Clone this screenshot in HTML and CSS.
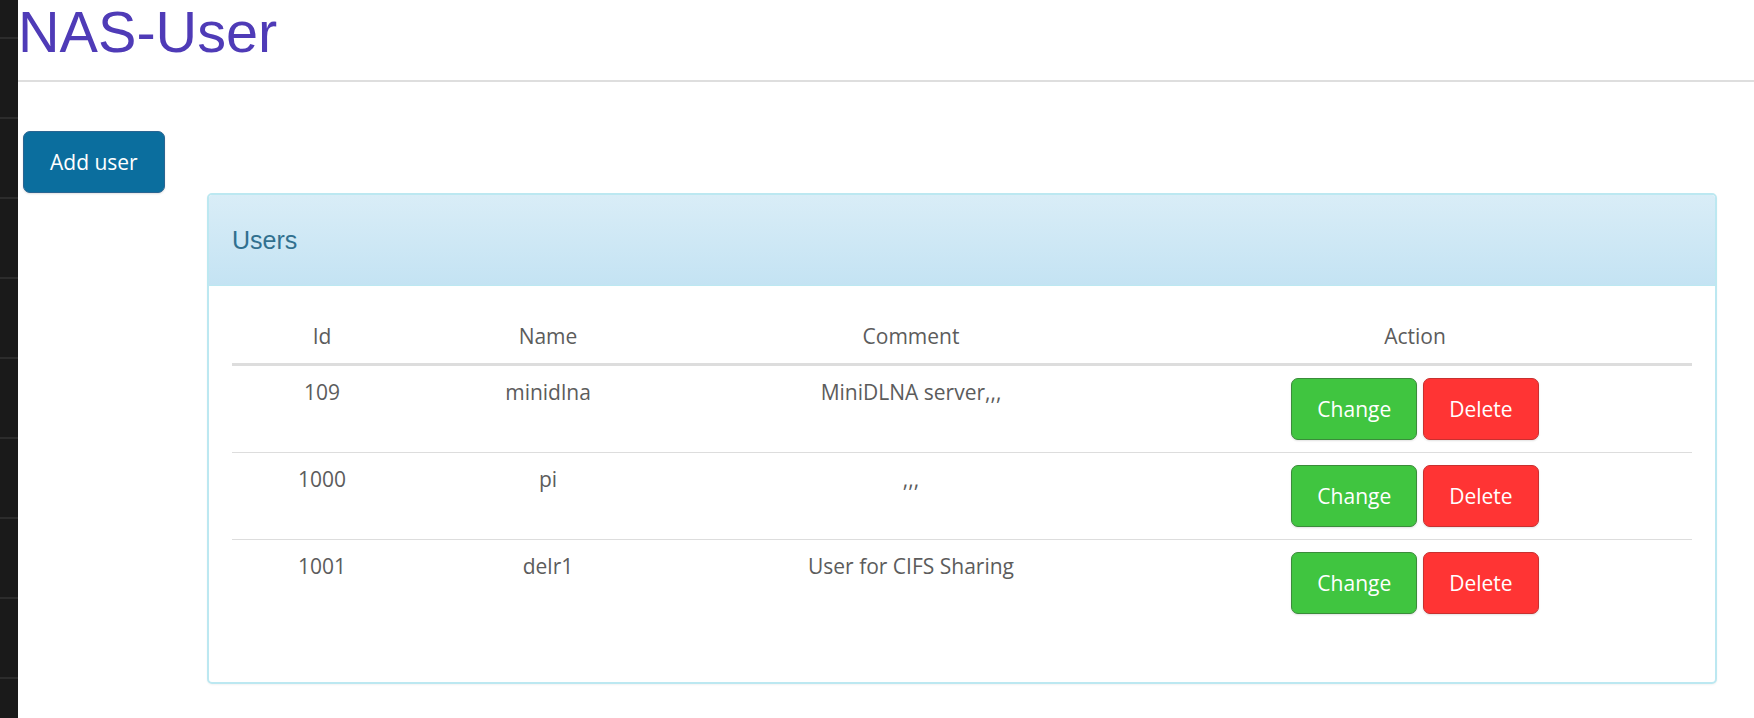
FILE: index.html
```html
<!DOCTYPE html>
<html lang="en">
<head>
<meta charset="utf-8">
<title>NAS-User</title>
<link rel="stylesheet" href="styles.css">
</head>
<body>
<div class="sidebar"></div>
<main class="main">
  <header class="page-header">
    <h1 class="title">NAS-User</h1>
  </header>
  <div class="toolbar">
    <button class="btn btn-primary">Add user</button>
  </div>
  <section class="panel">
    <div class="panel-heading">
      <h3 class="panel-title">Users</h3>
    </div>
    <div class="panel-body">
      <table class="table">
        <thead>
          <tr>
            <th class="col-id">Id</th>
            <th class="col-name">Name</th>
            <th class="col-comment">Comment</th>
            <th class="col-action">Action</th>
          </tr>
        </thead>
        <tbody>
          <tr>
            <td>109</td>
            <td>minidlna</td>
            <td>MiniDLNA server,,,</td>
            <td><div class="actions"><button class="btn btn-success">Change</button><button class="btn btn-danger">Delete</button></div></td>
          </tr>
          <tr>
            <td>1000</td>
            <td>pi</td>
            <td>,,,</td>
            <td><div class="actions"><button class="btn btn-success">Change</button><button class="btn btn-danger">Delete</button></div></td>
          </tr>
          <tr>
            <td>1001</td>
            <td>delr1</td>
            <td>User for CIFS Sharing</td>
            <td><div class="actions"><button class="btn btn-success">Change</button><button class="btn btn-danger">Delete</button></div></td>
          </tr>
        </tbody>
      </table>
    </div>
  </section>
</main>
</body>
</html>
```

FILE: styles.css
```css
* { box-sizing: border-box; }

html, body {
  margin: 0;
  padding: 0;
  background: #ffffff;
  height: 100%;
}

body {
  font-family: "Open Sans", "Liberation Sans", Arial, sans-serif;
  font-size: 21px;
  line-height: 28px;
  color: #5c5c5c;
  overflow: hidden;
}

.sidebar {
  position: fixed;
  left: 0;
  top: 0;
  bottom: 0;
  width: 18px;
  background-color: #1a1a1a;
  background-image: repeating-linear-gradient(
    to bottom,
    #1a1a1a 0px,
    #1a1a1a 37px,
    #2c2c2c 37px,
    #2c2c2c 39px,
    #1a1a1a 39px,
    #1a1a1a 80px
  );
  z-index: 2;
}

.main {
  padding-left: 16px;
}

.page-header {
  border-bottom: 2px solid #dedede;
  padding-bottom: 16px;
}

.title {
  margin: 0 0 0 2px;
  font-family: "Liberation Sans", Arial, sans-serif;
  font-weight: normal;
  font-size: 57.6px;
  line-height: 64px;
  color: #4f3bb7;
}

.toolbar {
  margin-top: 49px;
  padding-left: 7px;
  display: flex;
}

.btn {
  display: inline-block;
  font-family: "Open Sans", "Liberation Sans", Arial, sans-serif;
  font-size: 21px;
  line-height: 28px;
  padding: 16px 25px;
  border: 1px solid transparent;
  border-radius: 7px;
  color: #ffffff;
  cursor: pointer;
  box-shadow: 0 1px 2px rgba(0, 0, 0, 0.12);
}

.btn-primary {
  background: #0b6e9e;
  border-color: #2a6592;
  padding: 16px 26px;
}

.btn-success {
  background: #40c540;
  border-color: #3a8c3a;
}

.btn-danger {
  background: #ff3434;
  border-color: #c8302f;
}

.panel {
  margin-left: 191px;
  margin-right: 37px;
  border: 2px solid #bce8f1;
  border-radius: 5px;
  background: #ffffff;
  box-shadow: 0 1px 2px rgba(0, 0, 0, 0.05);
}

.panel-heading {
  height: 91px;
  display: flex;
  align-items: center;
  padding: 0 23px;
  background: linear-gradient(to bottom, #d9edf7 0%, #c4e3f3 100%);
  border-bottom: 1px solid #bce8f1;
  border-radius: 3px 3px 0 0;
}

.panel-title {
  margin: 0;
  font-family: "Liberation Sans", Arial, sans-serif;
  font-weight: normal;
  font-size: 25px;
  line-height: 28px;
  color: #31708f;
}

.panel-body {
  padding: 23px;
}

.table {
  width: 100%;
  border-collapse: separate;
  border-spacing: 0;
  table-layout: fixed;
  margin-bottom: 33px;
}

.table th,
.table td {
  text-align: center;
  font-weight: normal;
  padding: 12px;
  vertical-align: top;
}

.table th {
  padding: 13px 12px;
  vertical-align: bottom;
  border-bottom: 3px solid #dddddd;
}

.table td {
  border-top: 1px solid #dddddd;
}

.table tbody tr:first-child td {
  border-top: none;
}

.col-id { width: 180px; }
.col-name { width: 272px; }
.col-comment { width: 454px; }

.actions {
  display: flex;
  justify-content: center;
  gap: 6px;
}
```
